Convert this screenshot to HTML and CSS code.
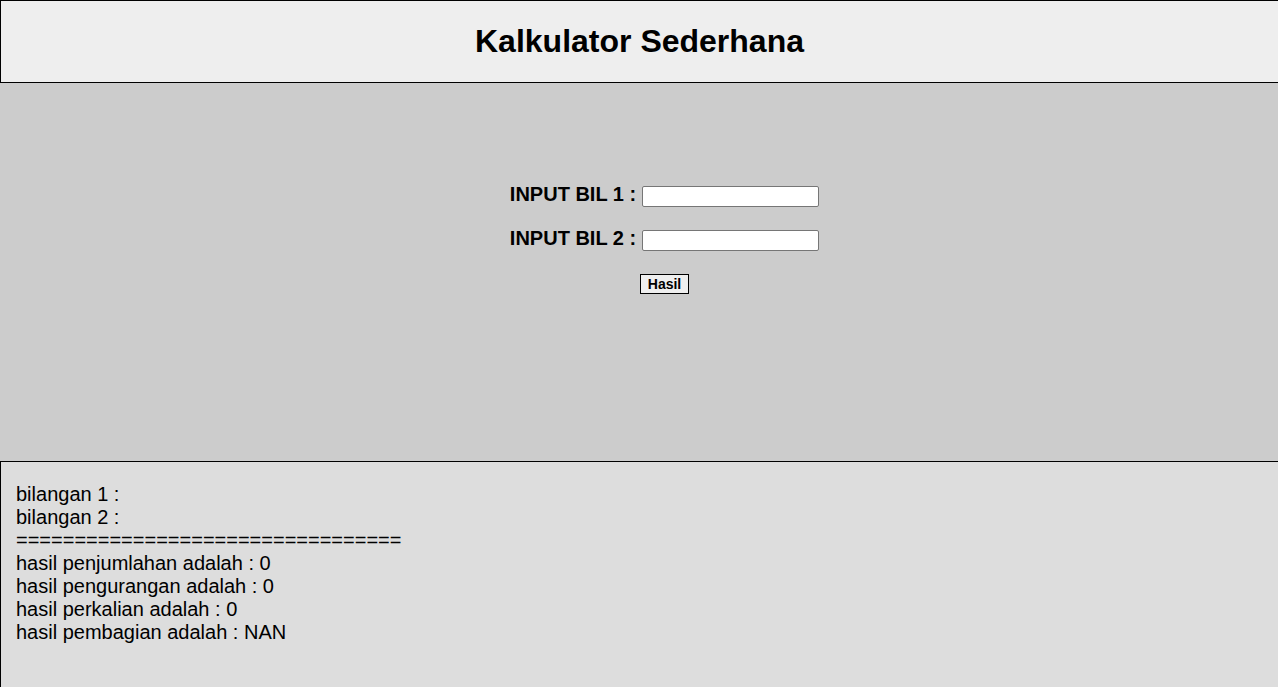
FILE: index.html
```html
<!DOCTYPE html>
<html lang="id">
<head>
<meta charset="utf-8">
<title>Kalkulator Sederhana</title>
<link rel="stylesheet" href="styles.css">
</head>
<body>
<header class="header">
  <h1 class="title">Kalkulator Sederhana</h1>
</header>
<main class="main">
  <form class="form">
    <div class="row">
      <label class="label" for="bil1">INPUT BIL 1 :</label>
      <input class="field" type="text" id="bil1">
    </div>
    <div class="row">
      <label class="label" for="bil2">INPUT BIL 2 :</label>
      <input class="field" type="text" id="bil2">
    </div>
    <div class="row">
      <button class="btn" type="button">Hasil</button>
    </div>
  </form>
</main>
<footer class="result">
  <div class="result-text">
    bilangan 1 :<br>
    bilangan 2 :<br>
    =================================<br>
    hasil penjumlahan adalah : 0<br>
    hasil pengurangan adalah : 0<br>
    hasil perkalian adalah : 0<br>
    hasil pembagian adalah : NAN
  </div>
</footer>
</body>
</html>
```

FILE: styles.css
```css
* {
  box-sizing: border-box;
}

html, body {
  margin: 0;
  padding: 0;
  overflow: hidden;
}

body {
  font-family: "Liberation Sans", Arial, sans-serif;
  color: #000;
  background: #ddd;
}

.header {
  height: 83px;
  background: #eee;
  border: 1px solid #000;
  border-right: 0;
  display: flex;
  align-items: center;
  justify-content: center;
}

.title {
  margin: 0;
  font-size: 32px;
  font-weight: bold;
  line-height: 37px;
}

.main {
  height: 378px;
  background: #ccc;
  padding-top: 102px;
  padding-left: 51px;
}

.form {
  display: flex;
  flex-direction: column;
  gap: 21px;
}

.row {
  height: 23px;
  display: flex;
  align-items: center;
  justify-content: center;
  gap: 6px;
}

.label {
  font-size: 20px;
  font-weight: bold;
  line-height: 23px;
  margin-bottom: 4px;
}

.field {
  width: 177px;
  height: 21px;
  margin: 0;
  padding: 1px 2px;
  border: 1px solid #767676;
  border-radius: 2px;
  background: #fff;
  font-family: "Liberation Sans", Arial, sans-serif;
  font-size: 13px;
}

.btn {
  height: 20px;
  margin: 0 0 2px;
  padding: 0 7px;
  border: 1px solid #000;
  background: #efefef;
  font-family: "Liberation Sans", Arial, sans-serif;
  font-size: 14px;
  font-weight: bold;
  line-height: 18px;
  color: #000;
}

.result {
  min-height: 260px;
  background: #ddd;
  border: 1px solid #000;
  border-right: 0;
  padding: 21px 15px;
}

.result-text {
  font-size: 20px;
  line-height: 23px;
}
```
